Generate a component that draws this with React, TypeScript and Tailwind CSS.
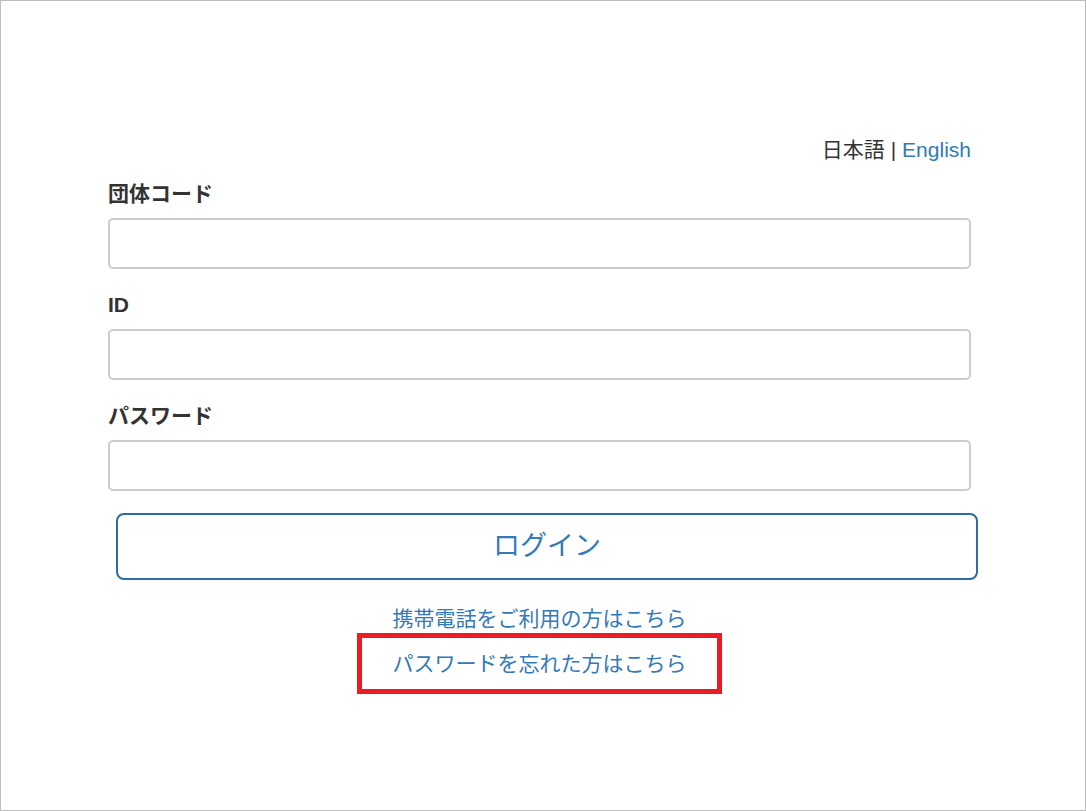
import React from "react";

const font = {
  fontFamily: '"Liberation Sans", "Noto Sans CJK JP", sans-serif',
};

function Field({ label, type = "text" }: { label: string; type?: string }) {
  return (
    <div className="flex flex-col">
      <label className="h-[24px] text-[21px] leading-[24px] font-bold text-[#333] mb-[12px]">
        {label}
      </label>
      <input
        type={type}
        className="h-[51px] w-full rounded-[5px] border-2 border-[#cccccc] bg-white px-3 outline-none"
      />
    </div>
  );
}

export default function App() {
  return (
    <div
      className="box-border h-[811px] w-[1086px] border border-[#bdbdbd] bg-white"
      style={font}
    >
      <div className="ml-[107px] w-[863px] pt-[137px]">
        <div className="flex justify-end h-[24px] text-[21px] leading-[24px] mb-[20px]">
          <span className="text-[#333]">日本語</span>
          <span className="text-[#333] mx-[6px]">|</span>
          <a className="text-[#337ab7]" href="#">English</a>
        </div>
        <div className="flex flex-col gap-[24px]">
          <Field label="団体コード" />
          <Field label="ID" />
          <Field label="パスワード" type="password" />
        </div>
        <button className="mt-[22px] ml-[8px] h-[67px] w-[862px] rounded-[8px] border-2 border-[#2d6ca2] bg-white text-[27px] text-[#337ab7]">
          ログイン
        </button>
        <div className="mt-[24px] flex flex-col items-center">
          <a className="h-[30px] text-[21px] leading-[30px] text-[#337ab7]" href="#">
            携帯電話をご利用の方はこちら
          </a>
          <div className="mt-[-1px] flex h-[61px] w-[365px] items-center justify-center border-[5px] border-[#ed1c24]">
            <a className="text-[21px] leading-[30px] text-[#337ab7]" href="#">
              パスワードを忘れた方はこちら
            </a>
          </div>
        </div>
      </div>
    </div>
  );
}
